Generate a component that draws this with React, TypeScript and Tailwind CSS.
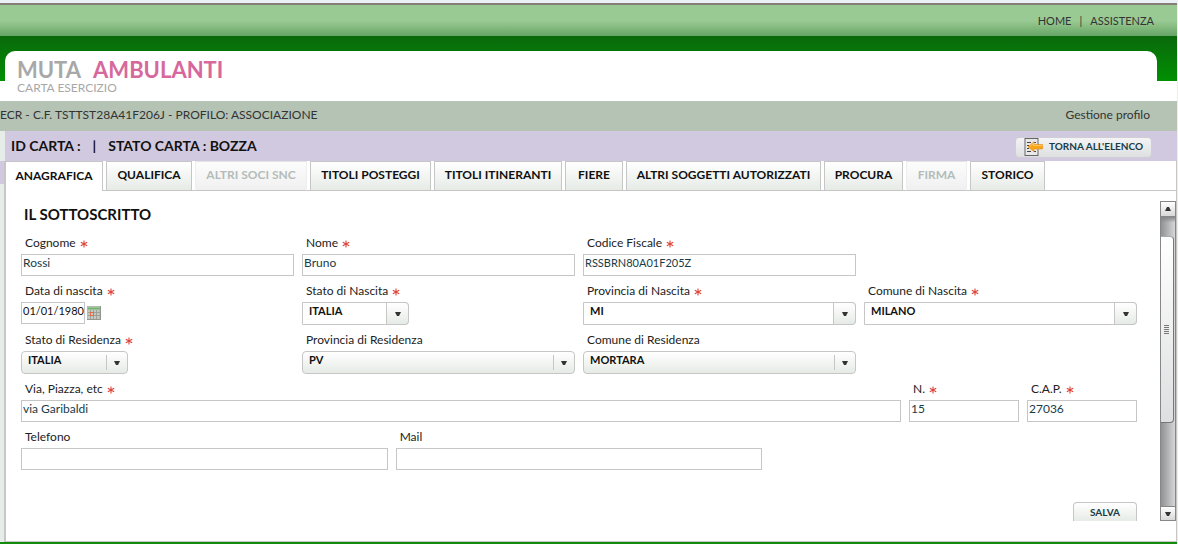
import type { ReactNode } from "react";

const tabs = [
	{ label: "QUALIFICA", width: "w-[86px]" },
	{ label: "ALTRI SOCI SNC", width: "w-[112px]", disabled: true },
	{ label: "TITOLI POSTEGGI", width: "w-[121px]" },
	{ label: "TITOLI ITINERANTI", width: "w-[128px]" },
	{ label: "FIERE", width: "w-[58px]" },
	{ label: "ALTRI SOGGETTI AUTORIZZATI", width: "w-[195px]" },
	{ label: "PROCURA", width: "w-[79px]" },
	{ label: "FIRMA", width: "w-[61px]", disabled: true },
	{ label: "STORICO", width: "w-[75px]" },
];

const Asterisk = () => (
	<svg width="8" height="8" viewBox="0 0 8 8" className="mt-[3px] ml-1" aria-hidden="true">
		<path d="M4 0.5V7.5M0.8 2.2L7.2 5.8M7.2 2.2L0.8 5.8" stroke="#dd4338" strokeWidth="1.1" />
	</svg>
);

const Arrow = () => (
	<svg width="6" height="4" viewBox="0 0 6 4" aria-hidden="true">
		<path d="M0 0H6L4 4H2Z" fill="#333" />
	</svg>
);

const Calendar = () => (
	<svg width="14" height="14" viewBox="0 0 14 14" aria-hidden="true">
		<rect width="14" height="14" fill="#b4b9b1" />
		<rect x="1" y="1" width="12" height="3" fill="#9bc498" />
		<rect x="1" y="2" width="12" height="1" fill="#70b36c" />
		<path d="M1 4H12V13H1Z" fill="#c4c9c1" />
		<path d="M1 6.5H13M1 9.5H13M3.5 4V13M6.5 4V13M9.5 4V13" stroke="#9ca299" strokeWidth="1" />
		<rect x="3.5" y="6.5" width="3" height="3" fill="none" stroke="#e2704c" />
		<path d="M0 13.5H14M13.5 0V14" stroke="#92988f" />
	</svg>
);

type FieldProps = {
	id: string;
	label: string;
	required?: boolean;
	className?: string;
	children: ReactNode;
};

const Field = ({ id, label, required, className = "", children }: FieldProps) => (
	<div className={className}>
		<label htmlFor={id} className="flex items-center h-[19px] pl-1 pb-1 text-[12px] leading-4 text-[#222]">
			{label}
			{required && <Asterisk />}
		</label>
		{children}
	</div>
);

type TextBoxProps = { id: string; value?: string; size?: string; color?: string };

const TextBox = ({ id, value, size = "text-[12px]", color = "text-[#173c48]" }: TextBoxProps) => (
	<input
		id={id}
		type="text"
		defaultValue={value}
		className={`block w-full h-[22px] border border-[#c6c6c6] bg-white pl-px pb-1.5 outline-none ${size} ${color}`}
	/>
);

type ComboProps = { id: string; value: string; width?: string; editable?: boolean };

const Combo = ({ id, value, width = "w-full", editable }: ComboProps) => (
	<div className={`relative h-[23px] ${width}`}>
		<select
			id={id}
			defaultValue={value}
			className={`block w-full h-full appearance-none border border-[#c6c6c6] pl-1.5 pb-1.5 text-[11px] leading-4 font-bold text-[#111] outline-none ${
				editable ? "rounded-r bg-white" : "rounded bg-linear-to-b from-white to-[#e6ebe6]"
			}`}
		>
			<option>{value}</option>
		</select>
		{editable ? (
			<span className="absolute inset-y-0 right-0 w-[23px] flex items-center justify-center pointer-events-none rounded-r border border-[#c6c6c6] bg-linear-to-b from-white to-[#e6ebe6]">
				<Arrow />
			</span>
		) : (
			<span className="absolute inset-y-1 right-0 w-[22px] pr-px flex items-center justify-center pointer-events-none border-l border-[#c6c6c6]">
				<Arrow />
			</span>
		)}
	</div>
);

const ScrollBar = () => (
	<div className="w-4 shrink-0 flex flex-col border border-[#858789] bg-linear-to-r from-[#909294] to-[#d6d7d8]">
		<button
			aria-label="Su"
			className="h-[15px] shrink-0 flex items-center justify-center border-b border-[#858789] bg-linear-to-b from-white to-[#d8d8d8]"
		>
			<span className="rotate-180">
				<Arrow />
			</span>
		</button>
		<div className="h-[19px] shrink-0 bg-linear-to-b from-[#858789] to-transparent to-30%" />
		<div className="h-[187px] mr-px pr-0.5 flex flex-col items-center justify-center gap-px rounded-r border-r border-y border-t-[#aaa] border-r-[#75777a] border-b-[#75777a] bg-linear-to-b from-white to-[#dedfe0]">
			<div className="w-[5px] h-px bg-[#777]" />
			<div className="w-[5px] h-px bg-[#777]" />
			<div className="w-[5px] h-px bg-[#777]" />
			<div className="w-[5px] h-px bg-[#777]" />
			<div className="w-[5px] h-px bg-[#777]" />
		</div>
		<div className="grow" />
		<button
			aria-label="Giù"
			className="h-[14px] shrink-0 flex items-center justify-center border-t border-[#858789] bg-linear-to-b from-white to-[#d8d8d8]"
		>
			<Arrow />
		</button>
	</div>
);

const Header = () => (
	<header>
		<div className="h-[5px] bg-[#ebeff6] border-b-2 border-[#857f78]" />
		<nav className="h-[31px] pt-0.5 flex items-center justify-end gap-2 pr-[23px] text-[11px] text-[#333] bg-linear-to-b from-[#9aca94] from-50% to-[#66a565]">
			<a href="#home">HOME</a>
			<span>|</span>
			<a href="#assistenza">ASSISTENZA</a>
		</nav>
		<div className="bg-linear-to-b from-[#09690b] to-[#009000] h-[45px] pl-[5px] pr-5 pt-[15px]">
			<div className="bg-white rounded-t-[10px] h-[50px] pl-3 pt-[7px]">
				<h1 className="flex gap-3 text-[22px] leading-6 font-bold text-[#a8a8a8]">
					<span>MUTA</span>
					<span className="text-[#d6689c]">AMBULANTI</span>
				</h1>
				<p className="text-[12px] leading-3 text-[#a8a8a8]">CARTA ESERCIZIO</p>
			</div>
		</div>
		<div className="mt-5 h-[30px] pr-[27px] pb-0.5 flex items-center justify-between bg-[#b5c3b5] text-[12px] text-[#333]">
			<span>ECR - C.F. TSTTST28A41F206J - PROFILO: ASSOCIAZIONE</span>
			<a href="#profilo">Gestione profilo</a>
		</div>
	</header>
);

const TabBar = () => (
	<div className="flex h-[30px]">
		<button className="w-[97px] pb-px border-t border-r border-[#c6c6c6] bg-white">ANAGRAFICA</button>
		<div className="w-[3px] border-b border-[#c6c6c6]" />
		{tabs.map((tab) => (
			<div key={tab.label} className="flex">
				<button
					disabled={tab.disabled}
					className={`pb-0.5 whitespace-nowrap border-b border-b-[#c6c6c6] bg-linear-to-b ${tab.width} ${
						tab.disabled
							? "border-x border-t border-x-[#eee] border-t-[#e4e4e4] from-[#fcfcfc] to-[#f0f0f0] text-[#b3bcb9]"
							: "border-x border-t border-x-[#c6c6c6] border-t-[#c6c6c6] from-white to-[#e6ebe6]"
					}`}
				>
					{tab.label}
				</button>
				<div className="w-[3px] border-b border-[#c6c6c6]" />
			</div>
		))}
		<div className="grow border-b border-[#c6c6c6]" />
	</div>
);

const Anagrafica = () => (
	<form className="grow pl-[15px] flex flex-col">
		<h2 className="h-[34px] pt-[3px] pl-[3px] text-[15px] leading-5 font-bold text-[#111]">IL SOTTOSCRITTO</h2>
		<div className="flex flex-col gap-[7px]">
			<div className="grid grid-cols-4 gap-2">
				<Field id="cognome" label="Cognome" required>
					<TextBox id="cognome" value="Rossi" />
				</Field>
				<Field id="nome" label="Nome" required>
					<TextBox id="nome" value="Bruno" />
				</Field>
				<Field id="cf" label="Codice Fiscale" required>
					<TextBox id="cf" value="RSSBRN80A01F205Z" size="text-[11px]" />
				</Field>
			</div>
			<div className="grid grid-cols-4 gap-2">
				<Field id="data" label="Data di nascita" required>
					<div className="flex items-center gap-0.5">
						<div className="w-16">
							<TextBox id="data" value="01/01/1980" size="text-[11px]" color="text-[#111]" />
						</div>
						<button type="button" aria-label="Calendario">
							<Calendar />
						</button>
					</div>
				</Field>
				<Field id="statoNascita" label="Stato di Nascita" required>
					<Combo id="statoNascita" value="ITALIA" width="w-[107px]" editable />
				</Field>
				<Field id="provNascita" label="Provincia di Nascita" required>
					<Combo id="provNascita" value="MI" editable />
				</Field>
				<Field id="comuneNascita" label="Comune di Nascita" required>
					<Combo id="comuneNascita" value="MILANO" editable />
				</Field>
			</div>
			<div className="grid grid-cols-4 gap-2">
				<Field id="statoRes" label="Stato di Residenza" required>
					<Combo id="statoRes" value="ITALIA" width="w-[107px]" />
				</Field>
				<Field id="provRes" label="Provincia di Residenza">
					<Combo id="provRes" value="PV" />
				</Field>
				<Field id="comuneRes" label="Comune di Residenza">
					<Combo id="comuneRes" value="MORTARA" />
				</Field>
			</div>
			<div className="flex gap-2">
				<Field id="via" label="Via, Piazza, etc" required className="grow">
					<TextBox id="via" value="via Garibaldi" />
				</Field>
				<Field id="numero" label="N." required className="w-[110px]">
					<TextBox id="numero" value="15" />
				</Field>
				<Field id="cap" label="C.A.P." required className="w-[110px]">
					<TextBox id="cap" value="27036" />
				</Field>
			</div>
			<div className="grid grid-cols-3 gap-2">
				<Field id="telefono" label="Telefono">
					<TextBox id="telefono" />
				</Field>
				<Field id="mail" label="Mail">
					<TextBox id="mail" />
				</Field>
			</div>
		</div>
		<button
			type="button"
			className="mt-8 self-end w-16 h-[19px] rounded-t border-x border-t border-[#c6c6c6] bg-linear-to-b from-white to-[#e6ebe6] text-[10px] font-bold text-[#173c48]"
		>
			SALVA
		</button>
	</form>
);

export default function App() {
	return (
		<div className="bg-white border-r border-[#efefe6] font-[Lato,'Trebuchet_MS',sans-serif]">
			<Header />
			<div className="flex border-b-2 border-[#128a0c]">
				<div className="w-1 shrink-0 bg-[#e6ede8] pt-[30px]">
					<div className="h-[23px] bg-[#d1c9df]" />
				</div>
				<main className="grow">
					<div className="border-l border-[#e6ede8]">
						<div className="h-[30px] pl-1.5 pr-[25px] flex items-center justify-between bg-[#d1c9df]">
							<h2 className="flex gap-3 pb-0.5 text-[14px] font-bold text-[#111]">
								<span>ID CARTA :</span>
								<span>|</span>
								<span>STATO CARTA : BOZZA</span>
							</h2>
							<button className="w-[137px] h-[21px] pb-px mt-0.5 pl-2 flex items-center gap-1.5 whitespace-nowrap rounded-sm border border-[#cfcfd3] bg-linear-to-b from-[#f4f4f6] to-[#dedfe1] text-[10px] font-bold text-[#173c48]">
								<svg width="19" height="18" viewBox="0 0 19 18" className="shrink-0" aria-hidden="true">
									<rect x="1" y="0.5" width="13" height="17" fill="#e8e8ea" stroke="#666" />
									<path d="M3 4.5H7M3 7.5H5M3 10.5H5M3 13.5H7M10 4.5H12M10 13.5H12" stroke="#444" />
									<path d="M4 8.8L10 3.8V6.5H18.5V11H10V13.8Z" fill="#f9a51c" stroke="#e99010" strokeWidth="0.6" />
									<path d="M6 8.2L9.5 5.4V7.5H18" fill="none" stroke="#ffc860" />
								</svg>
								TORNA ALL&apos;ELENCO
							</button>
						</div>
					</div>
					<div className="border-r border-b border-l-2 border-[#c6c6c6] text-[12px] text-[#111]">
						<div className="font-bold">
							<TabBar />
						</div>
						<div className="h-[350px] pt-2.5 pb-5 flex gap-[23px]">
							<Anagrafica />
							<ScrollBar />
						</div>
					</div>
				</main>
			</div>
		</div>
	);
}
